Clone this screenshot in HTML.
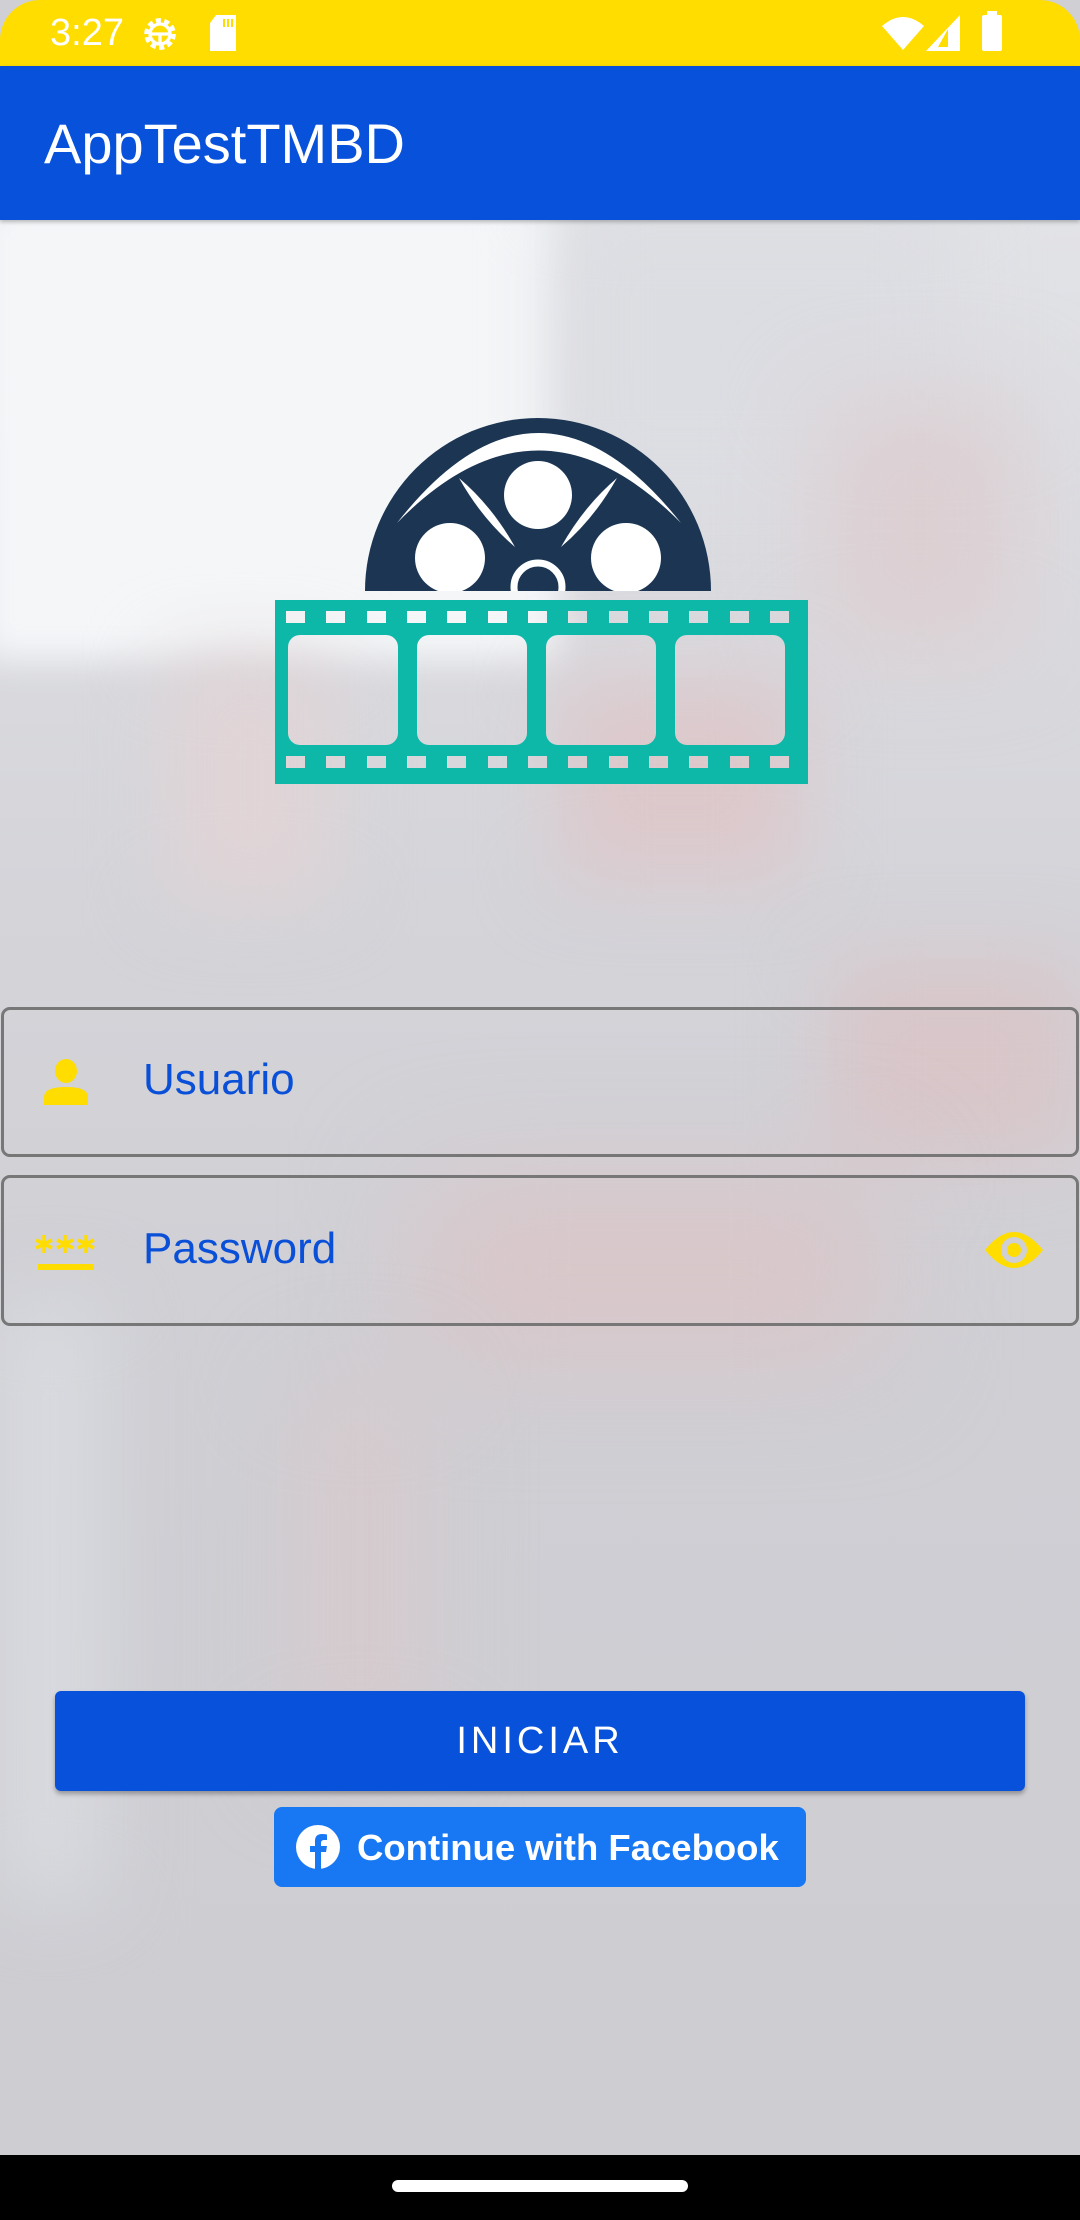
<!DOCTYPE html>
<html><head><meta charset="utf-8"><style>
*{margin:0;padding:0;box-sizing:border-box}
body{width:1080px;height:2220px;position:relative;overflow:hidden;background:#cfcfd4;font-family:"Liberation Sans",sans-serif}
.a{position:absolute}
.blob{position:absolute;filter:blur(40px)}
</style></head><body>
<div class="a" style="left:0;top:219px;width:1080px;height:1940px;background:linear-gradient(180deg,#e2e3e7 0%,#d4d4d9 35%,#cfcfd4 60%,#cdcdd2 100%)"></div>
<div class="blob" style="left:-20px;top:200px;width:580px;height:460px;background:#f4f6f8;filter:blur(18px)"></div>
<div class="blob" style="left:560px;top:200px;width:400px;height:300px;background:#dcdde2"></div>
<div class="blob" style="left:820px;top:400px;width:200px;height:250px;background:#dccfd2;filter:blur(50px)"></div>
<div class="blob" style="left:560px;top:680px;width:240px;height:200px;background:#dcc8cb"></div>
<div class="blob" style="left:170px;top:660px;width:160px;height:240px;background:#e0d4d6"></div>
<div class="blob" style="left:830px;top:960px;width:250px;height:200px;background:#d8c6c9"></div>
<div class="blob" style="left:420px;top:1180px;width:460px;height:180px;background:#d9c6c9;filter:blur(60px)"></div>
<div class="blob" style="left:300px;top:1380px;width:120px;height:380px;background:#d6cacd;filter:blur(50px)"></div>
<div class="blob" style="left:0px;top:1300px;width:100px;height:600px;background:#d9dbe0;filter:blur(40px)"></div>

<div class="a" style="left:0;top:0;width:1080px;height:66px;background:#ffdd00;border-radius:40px 40px 0 0"></div>
<div class="a" style="left:50px;top:12px;color:#fff;font-size:38px">3:27</div>
<svg class="a" style="left:140px;top:14px" width="40" height="40" viewBox="0 0 24 24"><circle cx="12" cy="12" r="8" fill="none" stroke="#fff" stroke-width="3" stroke-dasharray="3 2"/><circle cx="12" cy="12" r="6" fill="none" stroke="#fff" stroke-width="2"/><path d="M6 12h12M12 12v6" stroke="#fff" stroke-width="2"/></svg>
<svg class="a" style="left:208px;top:15px" width="30" height="36" viewBox="0 0 15 18"><path d="M4 0h10v18H1V4z" fill="#fff"/><path d="M8 2v4M10 2v4M12 2v4" stroke="#ffdd00" stroke-width="1"/></svg>
<svg class="a" style="left:882px;top:16px" width="42" height="34" viewBox="0 0 21 17"><path d="M0 5Q10.5-4 21 5L10.5 17z" fill="#fff"/></svg>
<svg class="a" style="left:926px;top:15px" width="34" height="36" viewBox="0 0 17 18"><path d="M17 0v18H0z" fill="#fff"/><path d="M11 7v9H6" fill="#ffdd00"/></svg>
<div class="a" style="left:982px;top:15px;width:20px;height:36px;background:#fff;border-radius:2px"></div>
<div class="a" style="left:987px;top:11px;width:10px;height:5px;background:#fff"></div>

<div class="a" style="left:0;top:66px;width:1080px;height:154px;background:#0852db;box-shadow:0 2px 4px rgba(0,0,0,.25)"></div>
<div class="a" style="left:44px;top:112px;color:#fff;font-size:56px;line-height:64px">AppTestTMBD</div>

<svg class="a" style="left:0;top:0" width="1080" height="900" viewBox="0 0 1080 900">
<defs><clipPath id="c"><rect x="0" y="0" width="1080" height="591"/></clipPath>
<mask id="m"><rect x="275" y="600" width="533" height="184" fill="#fff"/>
<g fill="#000">
<rect x="288" y="635" width="110" height="110" rx="12"/><rect x="417" y="635" width="110" height="110" rx="12"/><rect x="546" y="635" width="110" height="110" rx="12"/><rect x="675" y="635" width="110" height="110" rx="12"/>
</g>
<g fill="#000" id="h">
<rect x="286" y="611" width="19" height="12"/><rect x="326" y="611" width="19" height="12"/><rect x="367" y="611" width="19" height="12"/><rect x="407" y="611" width="19" height="12"/><rect x="447" y="611" width="19" height="12"/><rect x="488" y="611" width="19" height="12"/><rect x="528" y="611" width="19" height="12"/><rect x="568" y="611" width="19" height="12"/><rect x="609" y="611" width="19" height="12"/><rect x="649" y="611" width="19" height="12"/><rect x="689" y="611" width="19" height="12"/><rect x="730" y="611" width="19" height="12"/><rect x="770" y="611" width="19" height="12"/>
</g>
<use href="#h" y="145"/>
</mask></defs>
<g clip-path="url(#c)">
<path d="M365 591A173 173 0 0 1 711 591Z" fill="#1b3553"/>
<path d="M397 523Q538 343 681 523Q538 378 397 523Z" fill="#fff"/>
<circle cx="538" cy="495" r="34" fill="#fff"/>
<circle cx="450" cy="558" r="35" fill="#fff"/>
<circle cx="626" cy="558" r="35" fill="#fff"/>
<circle cx="538" cy="587" r="24" fill="none" stroke="#fff" stroke-width="7"/>
<path d="M459 478Q492 506 515 547Q482 519 459 478Z" fill="#fff"/>
<path d="M617 478Q584 506 561 547Q594 519 617 478Z" fill="#fff"/>
</g>
<rect x="275" y="600" width="533" height="184" fill="#0db8a8" mask="url(#m)"/>
</svg>

<div class="a" style="left:1px;top:1007px;width:1078px;height:150px;border:3px solid #777;border-radius:9px"></div>
<div class="a" style="left:1px;top:1175px;width:1078px;height:151px;border:3px solid #777;border-radius:9px"></div>
<svg class="a" style="left:44px;top:1059px" width="44" height="46" viewBox="0 0 44 46"><ellipse cx="22" cy="12" rx="11" ry="12" fill="#ffdd00"/><path d="M0 46V38Q0 28 22 28Q44 28 44 38V46Z" fill="#ffdd00"/></svg>
<div class="a" style="left:143px;top:1052px;color:#0a4fd8;font-size:44px;line-height:56px">Usuario</div>
<svg class="a" style="left:35px;top:1234px" width="62" height="38" viewBox="0 0 62 38"><g stroke="#ffdd00" stroke-width="3.5"><g id="s"><path d="M9 1v18M1 6l16 8M1 14l16-8"/></g><use href="#s" x="21"/><use href="#s" x="42"/></g><rect x="3" y="30" width="56" height="6" fill="#ffdd00"/></svg>
<div class="a" style="left:143px;top:1221px;color:#0a4fd8;font-size:44px;line-height:56px">Password</div>
<svg class="a" style="left:983px;top:1228px" width="62" height="44" viewBox="0 0 62 44"><path d="M2 22Q31-14 60 22Q31 58 2 22Z" fill="#ffdd00"/><circle cx="31" cy="22" r="13" fill="#cfcfd4"/><circle cx="31" cy="22" r="7" fill="#ffdd00"/></svg>

<div class="a" style="left:55px;top:1691px;width:970px;height:100px;background:#0852db;border-radius:6px;box-shadow:0 3px 5px rgba(0,0,0,.3);color:#fff;font-size:38px;letter-spacing:4px;text-align:center;line-height:100px">INICIAR</div>
<div class="a" style="left:274px;top:1807px;width:532px;height:80px;background:#1877f2;border-radius:8px"></div>
<svg class="a" style="left:296px;top:1825px" width="44" height="44" viewBox="0 0 44 44"><circle cx="22" cy="22" r="22" fill="#fff"/><path d="M19 44V27H14V21H19V16Q19 9 26 9Q29 9 31 9.5V15H28Q25 15 25 18V21H31L30 27H25V44Z" fill="#1877f2"/></svg>
<div class="a" style="left:357px;top:1823px;color:#fff;font-size:36.5px;font-weight:bold;line-height:50px">Continue with Facebook</div>

<div class="a" style="left:0;top:2155px;width:1080px;height:65px;background:#000"></div>
<div class="a" style="left:392px;top:2180px;width:296px;height:12px;background:#fff;border-radius:6px"></div>
</body></html>
